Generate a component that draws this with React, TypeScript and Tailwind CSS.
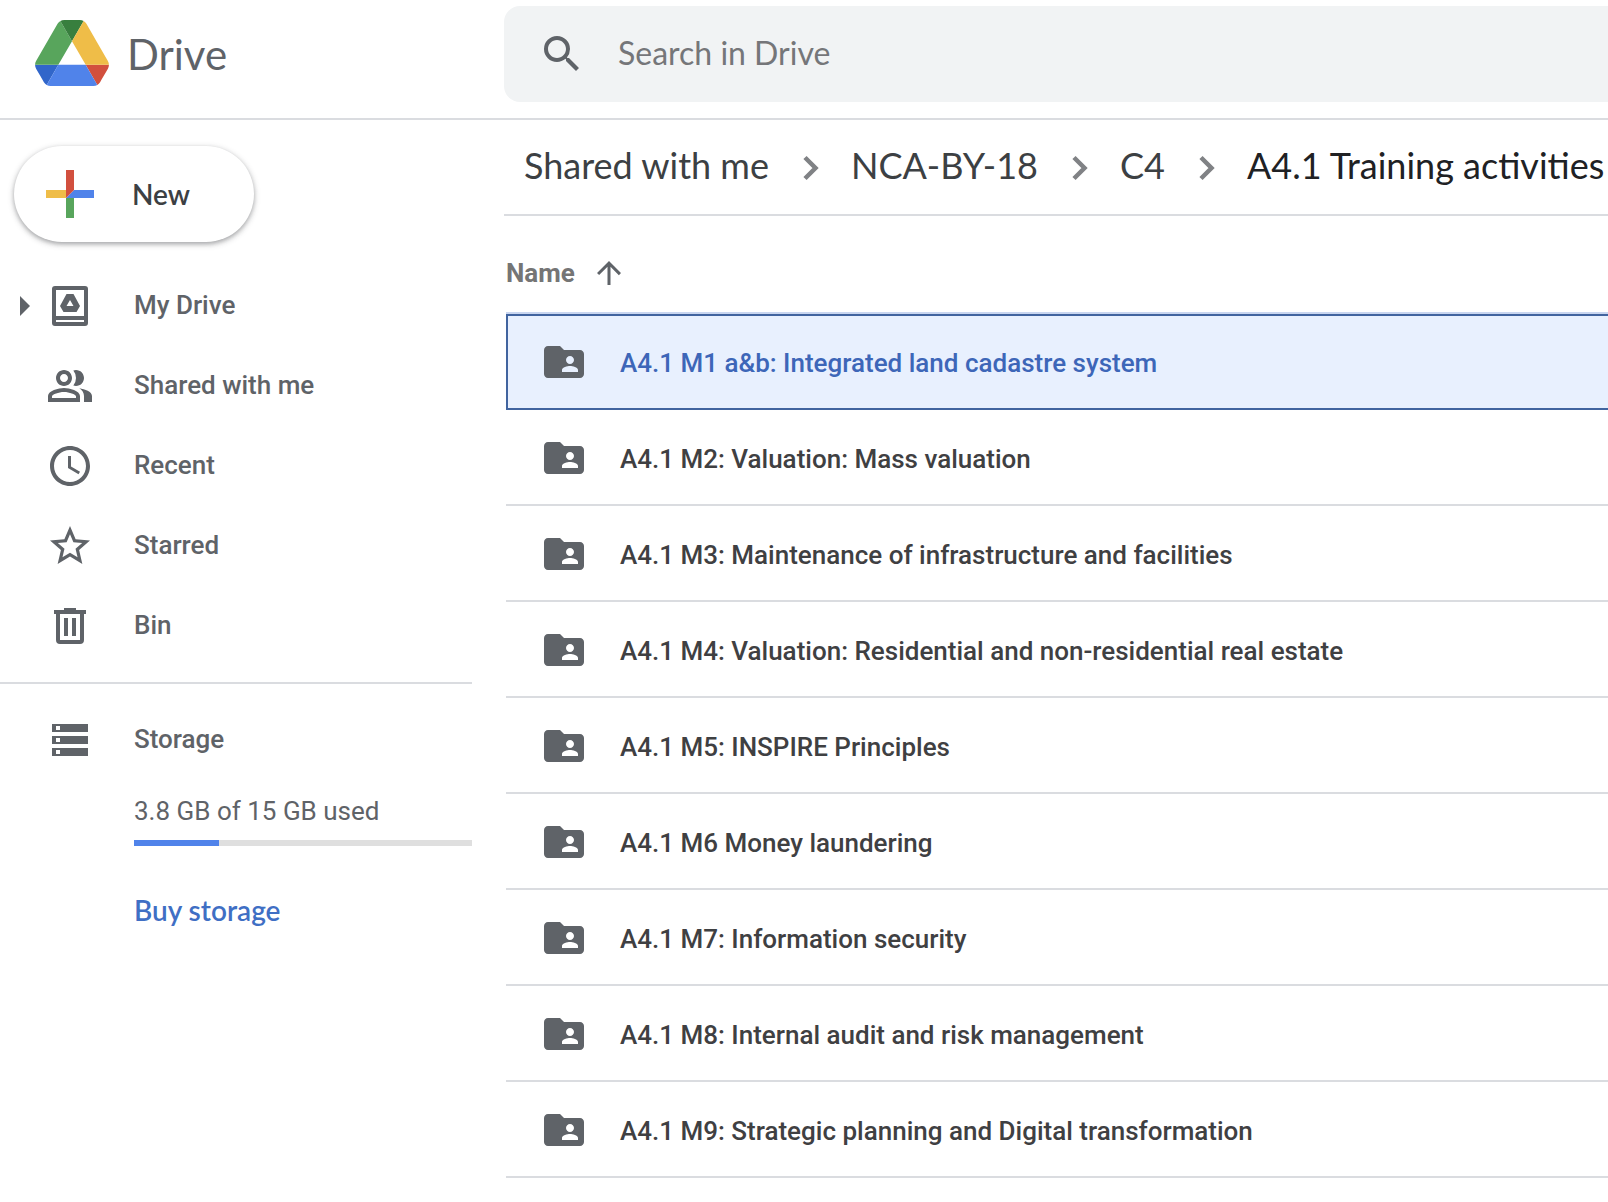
import type { ReactNode } from "react";
import {
  MdAccessTime,
  MdArrowUpward,
  MdFolderShared,
  MdOutlinePeopleAlt,
  MdSearch,
  MdStarBorder,
} from "react-icons/md";

const crumbs = ["Shared with me", "NCA-BY-18", "C4", "A4.1 Training activities"];

const folders = [
  "A4.1 M1 a&b: Integrated land cadastre system",
  "A4.1 M2: Valuation: Mass valuation",
  "A4.1 M3: Maintenance of infrastructure and facilities",
  "A4.1 M4: Valuation: Residential and non-residential real estate",
  "A4.1 M5: INSPIRE Principles",
  "A4.1 M6 Money laundering",
  "A4.1 M7: Information security",
  "A4.1 M8: Internal audit and risk management",
  "A4.1 M9: Strategic planning and Digital transformation",
];

const storage = { used: 3.8, total: 15 };
const usedPercent = Math.floor((storage.used / storage.total) * 100);

const DriveLogo = () => (
  <svg viewBox="0 0 87.3 78" className="h-[66px] w-[74px] shrink-0" aria-hidden="true">
    <path fill="#3166ca" d="m6.6 66.85 3.85 6.65c.8 1.4 1.95 2.5 3.3 3.3l13.75-23.8h-27.5c0 1.55.4 3.1 1.2 4.5z" />
    <path fill="#58a55c" d="m43.65 25-13.75-23.8c-1.35.8-2.5 1.9-3.3 3.3l-25.4 44a9.06 9.06 0 0 0-1.2 4.5h27.5z" />
    <path fill="#d2503e" d="m73.55 76.8c1.35-.8 2.5-1.9 3.3-3.3l1.6-2.75 7.65-13.25c.8-1.4 1.2-2.95 1.2-4.5h-27.5z" />
    <path fill="#387f3e" d="m43.65 25 13.75-23.8c-1.35-.8-2.9-1.2-4.5-1.2h-18.5c-1.6 0-3.15.45-4.5 1.2z" />
    <path fill="#5083ea" d="m59.8 53h-32.3l-13.75 23.8c1.35.8 2.9 1.2 4.5 1.2h50.8c1.6 0 3.15-.45 4.5-1.2z" />
    <path fill="#efbd48" d="m73.4 26.5-12.7-22c-.8-1.4-1.95-2.5-3.3-3.3l-13.75 23.8 16.15 28h27.45c0-1.55-.4-3.1-1.2-4.5z" />
  </svg>
);

const PlusIcon = () => (
  <svg viewBox="0 0 48 48" className="size-12" aria-hidden="true">
    <path fill="#efbd48" d="M0 20h20v8H0z" />
    <path fill="#58a55c" d="M20 28h8v20h-8z" />
    <path fill="#5083ea" d="M28 20h20v8H20z" />
    <path fill="#d2503e" d="M20 0h8v20l-8 8z" />
  </svg>
);

const ChevronIcon = () => (
  <svg viewBox="0 0 48 48" className="mx-[17px] size-12 text-[#808285]" aria-hidden="true">
    <path d="M19 14.5L29.5 25 19 35.5" fill="none" stroke="currentColor" strokeWidth="4.5" />
  </svg>
);

const MyDriveIcon = () => (
  <svg viewBox="0 0 48 48" className="size-12" fill="currentColor" fillRule="evenodd" aria-hidden="true">
    <path d="M9 4h30a3 3 0 0 1 3 3v34a3 3 0 0 1-3 3H9a3 3 0 0 1-3-3V7a3 3 0 0 1 3-3zM10 8v26h28V8zM10 38v2h28v-2z" />
    <path d="M20.5 12h7l6.5 12-3.5 6h-13L14 24zM24 18l-3.5 6h7z" />
  </svg>
);

const BinIcon = () => (
  <svg viewBox="0 0 48 48" className="size-12" fill="currentColor" fillRule="evenodd" aria-hidden="true">
    <path d="M18 6h12v2h10v4h-2v26a4 4 0 0 1-4 4H14a4 4 0 0 1-4-4V12H8V8h10zM14 12v26h20V12z" />
    <path d="M18 16h4v18h-4zM26 16h4v18h-4z" />
  </svg>
);

const StorageIcon = () => (
  <svg viewBox="0 0 48 48" className="size-12" fill="currentColor" fillRule="evenodd" aria-hidden="true">
    <path d="M6 8h36v8H6zM10 10v4h4v-4zM6 20h36v8H6zM10 22v4h4v-4zM6 32h36v8H6zM10 34v4h4v-4z" />
  </svg>
);

const NavItem = ({ icon, label, caret }: { icon: ReactNode; label: string; caret?: boolean }) => (
  <a href="#" className="flex h-20 items-center text-[#5f6368]">
    <span className="flex w-[46px] pl-5">
      {caret && (
        <svg viewBox="0 0 10 20" className="h-5 w-2.5" fill="currentColor" aria-hidden="true">
          <path d="M0 0l10 10L0 20z" />
        </svg>
      )}
    </span>
    {icon}
    <span className="ml-10 pb-0.5 text-[26px] font-medium">{label}</span>
  </a>
);

const Header = () => (
  <header className="flex h-[120px] border-b-2 border-[#dadce0]">
    <a href="#" className="flex w-[504px] shrink-0 items-center pb-3 pl-[35px] text-[#5f6368]">
      <DriveLogo />
      <span className="ml-[18px] pt-0.5 font-['Lato',sans-serif] text-[42px]">Drive</span>
    </a>
    <label className="mt-1.5 flex h-24 flex-1 items-center rounded-l-2xl bg-[#f1f3f4] pl-[34px]">
      <MdSearch className="size-12 shrink-0 text-[#5f6368]" />
      <input
        type="search"
        aria-label="Search in Drive"
        placeholder="Search in Drive"
        className="ml-8 min-w-0 flex-1 bg-transparent pb-0.5 font-['Lato',sans-serif] text-[32px] outline-none placeholder:text-[#757679]"
      />
    </label>
  </header>
);

const Sidebar = () => (
  <aside className="w-[504px] shrink-0 pr-8">
    <button
      type="button"
      className="mt-[26px] mb-6 ml-3.5 flex h-24 w-60 items-center rounded-full bg-white pl-8 shadow-[0_2px_4px_rgba(60,64,67,0.35),0_2px_6px_1px_rgba(60,64,67,0.16)]"
    >
      <PlusIcon />
      <span className="ml-[38px] font-['Lato',sans-serif] text-[28px] font-semibold text-[#3c4043]">New</span>
    </button>
    <nav>
      <NavItem icon={<MyDriveIcon />} label="My Drive" caret />
      <NavItem icon={<MdOutlinePeopleAlt className="size-12" />} label="Shared with me" />
      <NavItem icon={<MdAccessTime className="size-12" />} label="Recent" />
      <NavItem icon={<MdStarBorder className="size-12" />} label="Starred" />
      <NavItem icon={<BinIcon />} label="Bin" />
      <div className="mt-4 mb-4 border-t-2 border-[#dadce0]" />
      <NavItem icon={<StorageIcon />} label="Storage" />
    </nav>
    <div className="pl-[134px]">
      <p className="mt-3 pb-0.5 text-[26px] leading-[38px] text-[#5f6368]">
        {storage.used} GB of {storage.total} GB used
      </p>
      <div
        role="progressbar"
        aria-label="Storage used"
        aria-valuenow={storage.used}
        aria-valuemax={storage.total}
        className="mt-2 h-1.5 bg-[#dfdfdf]"
      >
        <div className="h-full bg-[#5083ea]" style={{ width: `${usedPercent}%` }} />
      </div>
      <a href="#" className="mt-11 block font-['Lato',sans-serif] text-[28px] leading-10 font-semibold text-[#3f6fc4]">
        Buy storage
      </a>
    </div>
  </aside>
);

const Breadcrumbs = () => (
  <nav
    aria-label="Breadcrumb"
    className="flex h-24 items-center border-b-2 border-[#dadce0] pl-5 font-['Lato',sans-serif] text-[36px] whitespace-nowrap text-[#3c4043]"
  >
    {crumbs.map((crumb, i) => (
      <span key={crumb} className="flex items-center">
        {i > 0 && <ChevronIcon />}
        <a href="#" className={i === crumbs.length - 1 ? "pb-1 text-[#202124]" : "pb-1"}>
          {crumb}
        </a>
      </span>
    ))}
  </nav>
);

const FolderTable = () => (
  <table className="ml-0.5 w-full border-separate border-spacing-0 text-left">
    <thead>
      <tr>
        <th className="h-[98px] border-b-2 border-[#c9d6f0] pt-[18px] text-[26px] font-bold text-[#757575]">
          <button type="button" className="flex items-center gap-4">
            Name
            <MdArrowUpward className="size-9 text-[#5f6368]" />
          </button>
        </th>
      </tr>
    </thead>
    <tbody>
      {folders.map((name, i) => (
        <tr key={name} aria-selected={i === 0}>
          <td
            className={
              i === 0
                ? "h-24 border-2 border-[#41649f] bg-[#e8f0fe] pl-8 text-[#3d66b8]"
                : "h-24 border-b-2 border-[#dadce0] pt-0.5 pl-[34px] text-[#3f4042]"
            }
          >
            <div className="flex items-center gap-8 text-[26px] font-medium">
              <MdFolderShared className="size-12 shrink-0 text-[#5f6368]" />
              <span className="pt-0.5">{name}</span>
            </div>
          </td>
        </tr>
      ))}
    </tbody>
  </table>
);

export default function App() {
  return (
    <div className="min-h-screen overflow-hidden bg-white font-['Roboto',sans-serif]">
      <Header />
      <div className="flex">
        <Sidebar />
        <main className="min-w-0 flex-1">
          <Breadcrumbs />
          <FolderTable />
        </main>
      </div>
    </div>
  );
}
